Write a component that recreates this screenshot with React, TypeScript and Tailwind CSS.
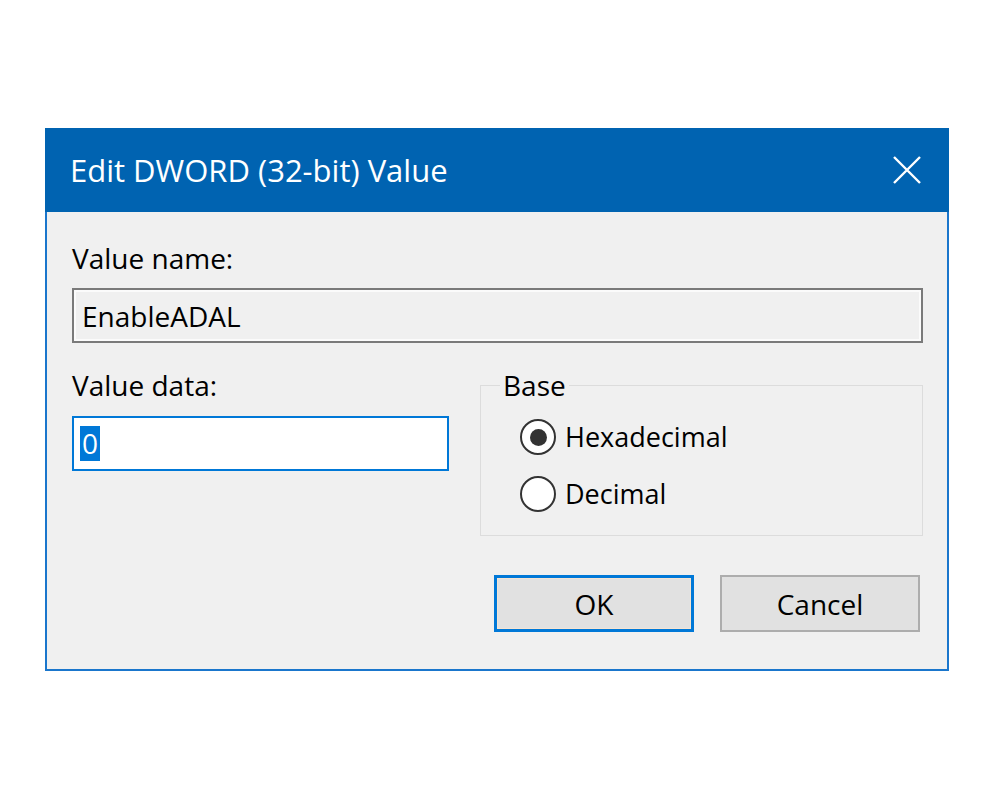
import { useState } from 'react'

const font = { fontFamily: '"Open Sans", "Noto Sans", "Liberation Sans", sans-serif' }

function Radio({ checked, label, onClick }: { checked: boolean; label: string; onClick: () => void }) {
  return (
    <button onClick={onClick} className="flex h-[36px] items-center gap-[9px] text-left">
      <span className="flex h-[36px] w-[36px] items-center justify-center rounded-full border-[2.5px] border-[#333] bg-white">
        {checked && <span className="h-[17px] w-[17px] rounded-full bg-[#333]" />}
      </span>
      <span className="text-[27px] leading-[30px] text-black">{label}</span>
    </button>
  )
}

export default function App() {
  const [base, setBase] = useState<'hex' | 'dec'>('hex')

  return (
    <div className="min-h-[800px] bg-white pl-[45px] pt-[128px]" style={font}>
      <div className="flex h-[543px] w-[904px] flex-col border-2 border-[#1a76cc] bg-[#f0f0f0]">
        {/* title bar */}
        <div className="-mx-[2px] -mt-[2px] flex h-[84px] items-center justify-between bg-[#0063b1] pl-[25px] pr-[28px]">
          <span className="text-[31px] leading-none text-white">Edit DWORD (32-bit) Value</span>
          <svg width="28" height="28" viewBox="0 0 28 28" className="text-white">
            <path d="M1 1 L27 27 M27 1 L1 27" stroke="currentColor" strokeWidth="2.4" fill="none" />
          </svg>
        </div>

        <div className="flex flex-1 flex-col pl-[25px] pr-[24px] pt-[31px] text-black">
          <div className="text-[28px] leading-[30px]">Value name:</div>
          <div className="mt-[15px] flex h-[55px] items-center border-2 border-[#7a7a7a] bg-[#f0f0f0] pl-[8px] text-[28px] shadow-[inset_0_0_0_2px_#fbfbfb]">
            EnableADAL
          </div>

          <div className="mt-[27px] flex gap-[31px]">
            <div className="flex w-[377px] flex-col">
              <div className="text-[28px] leading-[30px]">Value data:</div>
              <div className="mt-[16px] flex h-[55px] items-center border-2 border-[#0078d7] bg-white pl-[6px]">
                <span className="inline-block h-[35px] bg-[#0078d7] px-[2px] text-[28px] leading-[35px] text-white">0</span>
              </div>
            </div>

            <fieldset className="h-[166px] flex-1 border border-[#dcdcdc] pb-[22px] pl-[39px]">
              <legend className="-ml-[20px] px-[3px] text-[28px] leading-[30px]">Base</legend>
              <div className="mt-[19px] flex flex-col gap-[21px]">
                <Radio checked={base === 'hex'} label="Hexadecimal" onClick={() => setBase('hex')} />
                <Radio checked={base === 'dec'} label="Decimal" onClick={() => setBase('dec')} />
              </div>
            </fieldset>
          </div>

          <div className="mt-[39px] flex justify-end gap-[26px] pr-[3px]">
            <button className="flex h-[57px] w-[200px] items-center justify-center border-[3px] border-[#0078d7] bg-[#e1e1e1] text-[28px] shadow-[inset_0_0_0_1px_#f6e4d2]">
              OK
            </button>
            <button className="flex h-[57px] w-[200px] items-center justify-center border-2 border-[#adadad] bg-[#e1e1e1] text-[28px]">
              Cancel
            </button>
          </div>
        </div>
      </div>
    </div>
  )
}
